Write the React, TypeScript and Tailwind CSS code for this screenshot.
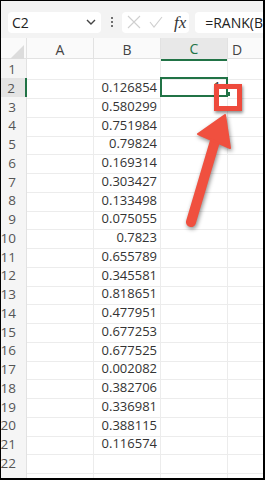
import React from 'react';

const values: string[] = [
  '',
  '0.126854',
  '0.580299',
  '0.751984',
  '0.79824',
  '0.169314',
  '0.303427',
  '0.133498',
  '0.075055',
  '0.7823',
  '0.655789',
  '0.345581',
  '0.818651',
  '0.477951',
  '0.677253',
  '0.677525',
  '0.002082',
  '0.382706',
  '0.336981',
  '0.388115',
  '0.116574',
  '',
  '',
];

const font = { fontFamily: '"Open Sans", "Noto Sans", sans-serif' };

const App: React.FC = () => {
  return (
    <div
      className="relative w-[265px] h-[480px] overflow-hidden bg-white border-t border-l border-r-2 border-b-2 border-black"
      style={font}
    >
      {/* Formula bar */}
      <div className="h-[37px] bg-[#f3f3f3] flex items-center pl-[7px] pt-[5px]">
        <div className="w-[97px] h-[21px] bg-white rounded-[4px] flex items-center justify-between pl-[4px] pr-[5px]">
          <span className="text-[14px] text-[#222]">C2</span>
          <svg width="10" height="6" viewBox="0 0 10 6" fill="none">
            <path d="M1 1l4 4 4-4" stroke="#444" strokeWidth="1.4" />
          </svg>
        </div>
        <div className="w-[22px] flex flex-col items-center gap-[2px]">
          <span className="w-[2px] h-[2px] bg-[#444] rounded-full" />
          <span className="w-[2px] h-[2px] bg-[#444] rounded-full" />
          <span className="w-[2px] h-[2px] bg-[#444] rounded-full" />
        </div>
        <div className="w-[70px] h-[21px] bg-white rounded-[4px] flex items-center pl-[5px]">
          <svg width="14" height="14" viewBox="0 0 14 14" fill="none">
            <path d="M1 1l12 12M13 1L1 13" stroke="#cfcfcf" strokeWidth="1.1" />
          </svg>
          <svg className="ml-[8px]" width="14" height="12" viewBox="0 0 14 12" fill="none">
            <path d="M1 6l4 5 8-10" stroke="#cfcfcf" strokeWidth="1.1" />
          </svg>
          <span
            className="ml-[11px] text-[17px] italic text-[#333] leading-none"
            style={{ fontFamily: '"Liberation Serif", serif' }}
          >
            fx
          </span>
        </div>
        <div className="ml-[6px] flex-1 h-[21px] bg-white rounded-l-[4px] flex items-center pl-[10px]">
          <span className="text-[14px] text-[#222] whitespace-nowrap">=RANK(B</span>
        </div>
      </div>

      {/* Column headers */}
      <div className="grid grid-cols-[26px_67px_67px_67px_1fr] h-[21px] bg-[#fafafa] border-b border-[#e2e2e2]">
        <div className="relative border-r border-[#e2e2e2]">
          <div className="absolute right-[2px] bottom-[2px] w-0 h-0 border-l-[14px] border-l-transparent border-b-[14px] border-b-[#dcdcdc]" />
        </div>
        <div className="flex items-center justify-center text-[14px] text-[#444] border-r border-[#e2e2e2]">A</div>
        <div className="flex items-center justify-center text-[14px] text-[#444] border-r border-[#e2e2e2]">B</div>
        <div className="flex items-center justify-center text-[14px] text-[#217346] bg-[#e8e8e8] border-r border-[#e2e2e2] border-b-2 border-b-[#217346]">
          C
        </div>
        <div className="flex items-center justify-start pl-[4px] text-[14px] text-[#444]">D</div>
      </div>

      {/* Rows */}
      {values.map((v, i) => {
        const row = i + 1;
        const active = row === 2;
        return (
          <div key={row} className="grid grid-cols-[26px_67px_67px_67px_1fr] h-[18.75px]">
            <div
              className={`flex items-center justify-end pr-[10px] text-[13.5px] text-[#555] border-b border-[#e2e2e2] ${
                active ? 'bg-[#e4e4e4] border-r-2 border-r-[#217346]' : 'bg-[#f5f5f5] border-r border-r-[#e2e2e2]'
              }`}
            >
              {row}
            </div>
            <div className="border-r border-b border-[#ececec]" />
            <div className="flex items-center justify-end pr-[3px] text-[13px] text-[#333] border-r border-b border-[#ececec]">
              {v}
            </div>
            <div
              className={`flex items-center justify-end pr-[5px] text-[13px] text-[#333] ${
                active ? 'border-2 border-[#217346] -mt-[1px] -ml-[1px] h-[20px]' : 'border-r border-b border-[#ececec]'
              }`}
            >
              {active ? '1' : ''}
            </div>
            <div className="border-b border-[#ececec]" />
          </div>
        );
      })}

      {/* Fill handle highlight box */}
      <div className="absolute left-[213px] top-[83px] w-[28px] h-[27px] border-[5px] border-[#ee4a3c] shadow-[1px_2px_3px_rgba(0,0,0,0.45)]">
        <div className="absolute left-[7px] top-[3px] w-[4px] h-[4px] bg-[#217346]" />
      </div>

      {/* Arrow */}
      <svg
        className="absolute left-0 top-0 pointer-events-none drop-shadow-[1px_2px_2px_rgba(0,0,0,0.45)]"
        width="265"
        height="480"
        viewBox="0 0 265 480"
      >
        <line x1="190" y1="221" x2="214" y2="140" stroke="#f0503f" strokeWidth="10" strokeLinecap="round" />
        <polygon points="224,114 197,133 229,147" fill="#f0503f" stroke="#f0503f" strokeWidth="2" strokeLinejoin="round" />
      </svg>
    </div>
  );
};

export default App;
